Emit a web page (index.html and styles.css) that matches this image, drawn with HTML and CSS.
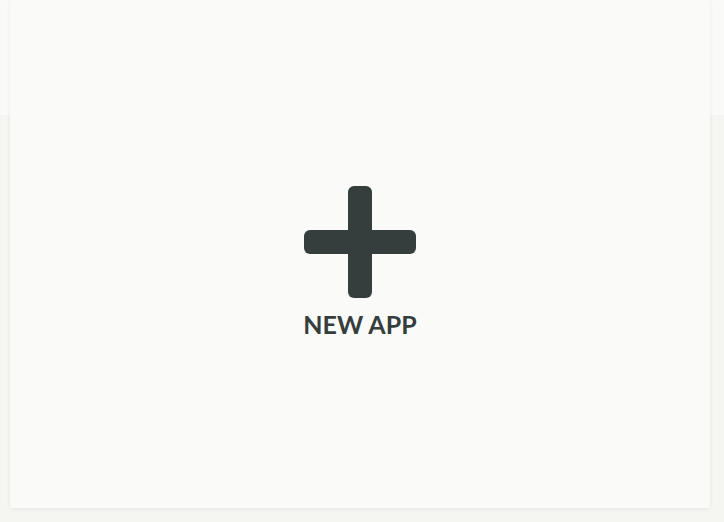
FILE: index.html
```html
<!DOCTYPE html>
<html>
<head>
<meta charset="utf-8">
<link rel="stylesheet" href="styles.css">
</head>
<body>
<div class="page">
  <div class="card">
    <div class="new-app">
      <svg class="plus" width="112" height="112" viewBox="0 0 112 112">
        <rect x="44" y="0" width="24" height="112" rx="6" ry="6" fill="#363d3d"/>
        <rect x="0" y="44" width="112" height="24" rx="6" ry="6" fill="#363d3d"/>
      </svg>
      <div class="label">NEW APP</div>
    </div>
  </div>
</div>
</body>
</html>
```

FILE: styles.css
```css
html, body {
  margin: 0;
  padding: 0;
}
body {
  background: linear-gradient(#fafaf8 0, #fafaf8 115px, #f5f5f2 115px);
  height: 522px;
  font-family: Lato, "Open Sans", sans-serif;
}
.page {
  padding: 0 14px 0 10px;
}
.card {
  height: 508px;
  background: #fafaf8;
  box-shadow: 0 1px 4px rgba(0, 0, 0, 0.07);
  display: flex;
  justify-content: center;
}
.new-app {
  padding-top: 186px;
  display: flex;
  flex-direction: column;
  align-items: center;
}
.plus {
  display: block;
}
.label {
  margin-top: 12px;
  font-size: 25px;
  font-weight: 700;
  color: #363d3d;
  line-height: 28px;
}
```
